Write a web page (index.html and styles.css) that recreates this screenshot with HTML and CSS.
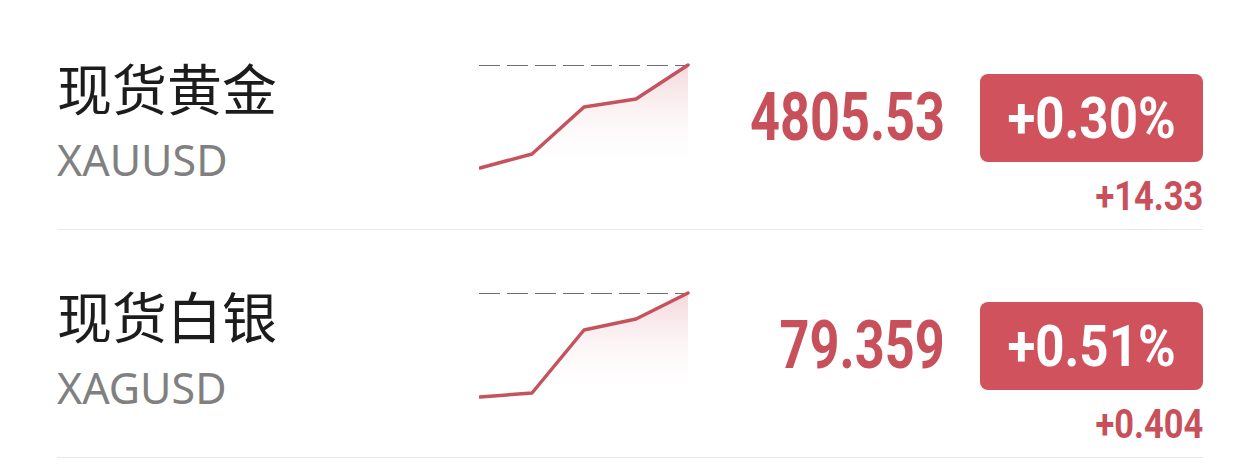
FILE: index.html
```html
<!DOCTYPE html>
<html lang="zh">
<head>
<meta charset="utf-8">
<title>行情</title>
<link rel="stylesheet" href="styles.css">
</head>
<body>
<div class="list">
  <div class="row">
    <div class="info">
      <div class="name">现货黄金</div>
      <div class="symbol">XAUUSD</div>
    </div>
    <svg class="chart" width="211" height="108" viewBox="0 0 211 108">
      <defs>
        <linearGradient id="g1" x1="0" y1="0" x2="0" y2="1">
          <stop offset="0" stop-color="#f3d3d7" stop-opacity="0.9"/>
          <stop offset="1" stop-color="#ffffff" stop-opacity="0"/>
        </linearGradient>
      </defs>
      <line x1="0" y1="2.5" x2="210" y2="2.5" stroke="#6e6e6e" stroke-width="1" stroke-dasharray="21 7"/>
      <polygon points="1,105 53,91 105,44 157,36 209,2 209,108 1,108" fill="url(#g1)"/>
      <polyline points="1,105 53,91 105,44 157,36 209,2" fill="none" stroke="#c4535e" stroke-width="3.5" stroke-linejoin="round" stroke-linecap="round"/>
    </svg>
    <div class="price"><span class="num">4805.53</span></div>
    <div class="change">
      <div class="badge"><span class="num">+0.30%</span></div>
      <div class="delta"><span class="num">+14.33</span></div>
    </div>
  </div>
  <div class="row">
    <div class="info">
      <div class="name">现货白银</div>
      <div class="symbol">XAGUSD</div>
    </div>
    <svg class="chart" width="211" height="108" viewBox="0 0 211 108">
      <defs>
        <linearGradient id="g2" x1="0" y1="0" x2="0" y2="1">
          <stop offset="0" stop-color="#f3d3d7" stop-opacity="0.9"/>
          <stop offset="1" stop-color="#ffffff" stop-opacity="0"/>
        </linearGradient>
      </defs>
      <line x1="0" y1="2.5" x2="210" y2="2.5" stroke="#6e6e6e" stroke-width="1" stroke-dasharray="21 7"/>
      <polygon points="1,106 53,102 105,39 157,28 209,2 209,108 1,108" fill="url(#g2)"/>
      <polyline points="1,106 53,102 105,39 157,28 209,2" fill="none" stroke="#c4535e" stroke-width="3.5" stroke-linejoin="round" stroke-linecap="round"/>
    </svg>
    <div class="price"><span class="num">79.359</span></div>
    <div class="change">
      <div class="badge"><span class="num">+0.51%</span></div>
      <div class="delta"><span class="num">+0.404</span></div>
    </div>
  </div>
</div>
</body>
</html>
```
FILE: styles.css
```css
html, body {
  margin: 0;
  padding: 0;
  background: #ffffff;
}

.list {
  padding: 2px 57px 0 57px;
}

.row {
  display: flex;
  align-items: flex-start;
  height: 227px;
  border-bottom: 1px solid #e8e8e8;
}

.info {
  flex-shrink: 0;
  width: 422px;
  padding-top: 54px;
}

.name {
  font-family: "Noto Sans CJK SC", "Noto Sans", sans-serif;
  font-size: 55px;
  line-height: 60px;
  color: #1c1c1c;
  font-weight: 400;
}

.symbol {
  margin-top: 19px;
  font-family: "Noto Sans", "Open Sans", sans-serif;
  font-size: 43px;
  line-height: 50px;
  color: #808080;
}

.chart {
  display: block;
  flex-shrink: 0;
  margin-top: 61px;
}

.num {
  display: inline-block;
  font-family: Roboto, "Noto Sans", sans-serif;
  font-weight: 700;
  transform-origin: right center;
}

.price {
  flex: 1;
  margin-top: 82px;
  padding-right: 35px;
  text-align: right;
  font-size: 67px;
  line-height: 67px;
  color: #c8505b;
}

.price .num {
  transform: scaleX(0.78);
}

.change {
  flex-shrink: 0;
  width: 223px;
  margin-top: 72px;
}

.badge {
  height: 88px;
  border-radius: 8px;
  background: #cf525d;
  color: #ffffff;
  display: flex;
  align-items: center;
  justify-content: center;
  font-size: 58px;
  line-height: 58px;
}

.badge .num {
  transform: scaleX(0.88);
  transform-origin: center center;
}

.delta {
  margin-top: 15px;
  text-align: right;
  font-size: 40px;
  line-height: 40px;
  color: #c8505b;
}

.delta .num {
  transform: scaleX(0.86);
}
```
